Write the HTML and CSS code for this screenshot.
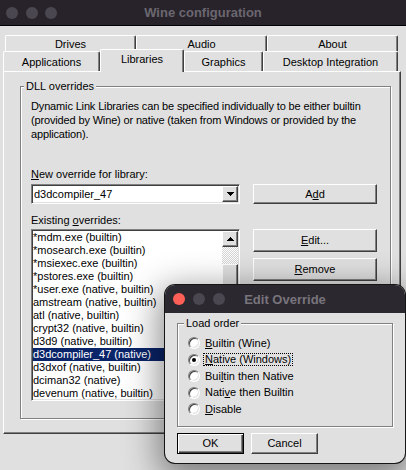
FILE: index.html
```html
<!DOCTYPE html>
<html>
<head>
<meta charset="utf-8">
<title>Wine configuration</title>
<link rel="stylesheet" href="styles.css">
</head>
<body>
<div class="win">
  <div class="titlebar">
    <div class="lights"><span class="light"></span><span class="light"></span><span class="light"></span></div>
    <div class="title">Wine configuration</div>
    <div></div>
  </div>
  <div class="tabs">
    <div class="tabrow row1">
      <div class="tab">Drives</div>
      <div class="tab">Audio</div>
      <div class="tab">About</div>
    </div>
    <div class="tabrow row2">
      <div class="tab t-apps">Applications</div>
      <div class="tab t-lib sel">Libraries</div>
      <div class="tab t-gfx">Graphics</div>
      <div class="tab t-desk">Desktop Integration</div>
    </div>
  </div>
  <div class="panel">
    <div class="group">
      <div class="legend">DLL overrides</div>
      <p class="desc">Dynamic Link Libraries can be specified individually to be either builtin<br>(provided by Wine) or native (taken from Windows or provided by the<br>application).</p>
      <div class="lbl l1"><u>N</u>ew override for library:</div>
      <div class="row r1">
        <div class="combo">
          <span class="combo-text">d3dcompiler_47</span>
          <span class="bevel abtn"><svg width="7" height="4" viewBox="0 0 7 4" shape-rendering="crispEdges"><path d="M0 0h7v1h-1v1h-1v1h-1v1h-1v-1h-1v-1h-1v-1h-1z" fill="#000"/></svg></span>
        </div>
        <div class="bevel btn add">A<u>d</u>d</div>
      </div>
      <div class="lbl l2">Existing <u>o</u>verrides:</div>
      <div class="row r2">
        <div class="list">
          <div class="items">
            <div class="item">*mdm.exe (builtin)</div>
            <div class="item">*mosearch.exe (builtin)</div>
            <div class="item">*msiexec.exe (builtin)</div>
            <div class="item">*pstores.exe (builtin)</div>
            <div class="item">*user.exe (native, builtin)</div>
            <div class="item">amstream (native, builtin)</div>
            <div class="item">atl (native, builtin)</div>
            <div class="item">crypt32 (native, builtin)</div>
            <div class="item">d3d9 (native, builtin)</div>
            <div class="item sel">d3dcompiler_47 (native)</div>
            <div class="item">d3dxof (native, builtin)</div>
            <div class="item">dciman32 (native)</div>
            <div class="item">devenum (native, builtin)</div>
          </div>
          <div class="sb">
            <div class="bevel sb-up"><svg width="7" height="4" viewBox="0 0 7 4" shape-rendering="crispEdges"><path d="M3 0h1v1h1v1h1v1h1v1h-7v-1h1v-1h1v-1h1z" fill="#000"/></svg></div>
            <div class="sb-track"></div>
            <div class="bevel sb-thumb"></div>
          </div>
        </div>
        <div class="btncol">
          <div class="bevel btn tall"><u>E</u>dit...</div>
          <div class="bevel btn tall"><u>R</u>emove</div>
        </div>
      </div>
    </div>
  </div>
</div>

<div class="dialog">
  <div class="dtitle">
    <div class="lights dlights"><span class="light red"></span><span class="light"></span><span class="light"></span></div>
    <div class="title dtext">Edit Override</div>
    <div></div>
  </div>
  <div class="dbody">
    <div class="dgroup">
      <div class="legend">Load order</div>
      <div class="radios">
        <div class="ropt"><span class="radio"></span><span><u>B</u>uiltin (Wine)</span></div>
        <div class="ropt"><span class="radio on"></span><span class="focus"><u>N</u>ative (Windows)</span></div>
        <div class="ropt"><span class="radio"></span><span>Bui<u>l</u>tin then Native</span></div>
        <div class="ropt"><span class="radio"></span><span>Nati<u>v</u>e then Builtin</span></div>
        <div class="ropt"><span class="radio"></span><span><u>D</u>isable</span></div>
      </div>
    </div>
    <div class="dbtns">
      <div class="btn def">OK</div>
      <div class="bevel btn">Cancel</div>
    </div>
  </div>
</div>
</body>
</html>
```
FILE: styles.css
```css
* { box-sizing: border-box; }
html, body { margin: 0; padding: 0; }
body {
  width: 406px;
  height: 470px;
  overflow: hidden;
  background: #e0e0e0;
  font-family: "Liberation Sans", Arial, sans-serif;
  font-size: 11px;
  color: #000;
  position: relative;
}
u { text-decoration: underline; text-underline-offset: 1px; }

.win { height: 470px; background: #e0e0e0; }

.titlebar {
  height: 26px;
  background: #28232b;
  border-bottom: 1px solid #000;
  display: grid;
  grid-template-columns: 1fr auto 1fr;
  align-items: center;
}
.lights { display: flex; gap: 7.5px; padding-left: 6px; }
.light { width: 12px; height: 12px; border-radius: 50%; background: #4b4751; }
.title { font-weight: bold; font-size: 13px; color: #6b6770; }

.tabs { padding-top: 9px; }
.tabrow { display: flex; }
.row1 { height: 16px; margin-left: 5px; }
.row2 { height: 20px; margin-left: 3px; align-items: flex-end; }
.tab {
  border: 1px solid #fff;
  border-bottom: 0;
  border-right-color: #404040;
  box-shadow: inset -1px 0 #808080;
  border-radius: 2px 2px 0 0;
  text-align: center;
  line-height: 13px;
  background: #e0e0e0;
  white-space: nowrap;
}
.row1 .tab { width: 131px; height: 16px; padding-top: 2px; }
.row2 .tab { height: 20px; padding-top: 4px; }
.t-apps { width: 97px; }
.t-lib { width: 84px; }
.t-gfx { width: 79px; }
.t-desk { width: 135px; }
.row2 .tab.sel {
  height: 23px;
  margin-bottom: -1px;
  padding-top: 3px;
  position: relative;
  z-index: 1;
}

.panel {
  margin-left: 3px;
  width: 398px;
  height: 363px;
  border: 1px solid #fff;
  border-right-color: #404040;
  border-bottom-color: #404040;
  box-shadow: inset -1px -1px #808080;
  padding: 14px 0 0 16px;
}

.group {
  width: 371px;
  border: 1px solid #808080;
  box-shadow: inset 1px 1px #fff, 1px 1px #fff;
  padding: 0 13px 17px 10px;
}
.legend {
  width: fit-content;
  margin: -7px 0 0 -7px;
  padding: 0 2px;
  background: #e0e0e0;
  line-height: 13px;
  white-space: nowrap;
}
.desc { margin: 6px 0 0; line-height: 14px; letter-spacing: -0.15px; white-space: nowrap; }
.lbl { line-height: 13px; }
.l1 { margin-top: 27px; }
.l2 { margin-top: 10px; }
.row { display: flex; gap: 13px; align-items: flex-start; }
.r1 { margin-top: 3px; }
.r2 { margin-top: 2px; }

.bevel {
  background: #e0e0e0;
  border: 1px solid;
  border-color: #fff #404040 #404040 #fff;
  box-shadow: inset -1px -1px #808080;
}
.btn {
  display: flex;
  align-items: center;
  justify-content: center;
  line-height: 13px;
}
.add { width: 124px; height: 20px; }
.tall { width: 124px; height: 23px; }
.btncol { display: flex; flex-direction: column; gap: 6px; }

.sunken {
  border: 1px solid;
}
.combo {
  width: 209px;
  height: 20px;
  background: #fff;
  border: 1px solid;
  border-color: #808080 #fff #fff #808080;
  box-shadow: inset 1px 1px #404040, inset -1px -1px #e0e0e0;
  display: flex;
  align-items: center;
  padding: 1px;
}
.combo-text { flex: 1; padding-left: 1px; line-height: 13px; }
.abtn {
  width: 16px;
  height: 16px;
  display: flex;
  align-items: center;
  justify-content: center;
}

.list {
  width: 209px;
  height: 172px;
  display: flex;
  background: #fff;
  border: 1px solid;
  border-color: #808080 #fff #fff #808080;
  box-shadow: inset 1px 1px #404040, inset -1px -1px #e0e0e0;
  padding: 1px;
}
.items { flex: 1; overflow: hidden; }
.item { height: 13px; line-height: 13px; white-space: nowrap; }
.item.sel { background: #0a246a; color: #fff; }
.sb { width: 16px; display: flex; flex-direction: column; }
.sb-up {
  height: 16px;
  display: flex;
  align-items: center;
  justify-content: center;
}
.sb-track {
  height: 17px;
  background: repeating-conic-gradient(#ffffff 0 25%, #d4d4d4 0 50%) 0 0 / 2px 2px;
}
.sb-thumb { flex: 1; }

.dialog {
  position: absolute;
  left: 165px;
  top: 285px;
  width: 240px;
  height: 178px;
  border-radius: 10px;
  background: #e0e0e0;
  box-shadow: 0 0 0 1px #151515, 0 10px 35px 6px rgba(0, 0, 0, 0.45);
  overflow: hidden;
}
.dtitle {
  height: 28px;
  background: #2b2830;
  display: grid;
  grid-template-columns: 1fr auto 1fr;
  align-items: center;
}
.dlights { gap: 8px; padding-left: 8px; }
.light.red { background: #fe5f57; }
.dtext { color: #78747c; }
.dbody { padding: 10px 12px 9px 12px; }
.dgroup {
  height: 104px;
  border: 1px solid #808080;
  box-shadow: inset 1px 1px #fff, 1px 1px #fff;
  padding: 0 0 0 10px;
}
.dgroup .legend { margin-left: -4px; }
.radios { margin-top: 5px; }
.ropt {
  height: 16.5px;
  display: flex;
  align-items: center;
  gap: 5px;
  line-height: 13px;
  white-space: nowrap;
}
.radio {
  width: 12px;
  height: 12px;
  flex: none;
  border-radius: 50%;
  background: #fff;
  border: 1px solid;
  border-color: #808080 #fff #fff #808080;
  box-shadow: inset 1px 1px #404040, inset -1px -1px #e0e0e0;
  display: flex;
  align-items: center;
  justify-content: center;
}
.radio.on::after {
  content: "";
  width: 4px;
  height: 4px;
  border-radius: 50%;
  background: #000;
}
.focus {
  border: 1px dotted #000;
  padding: 0 1px;
  margin-left: -2px;
  line-height: 11px;
}
.dbtns { display: flex; gap: 7px; margin-top: 6px; }
.dbtns .btn { width: 67px; height: 21px; }
.btn.def {
  background: #e0e0e0;
  border: 1px solid #000;
  box-shadow: inset 1px 1px #fff, inset -1px -1px #404040, inset -2px -2px #808080;
}
```
